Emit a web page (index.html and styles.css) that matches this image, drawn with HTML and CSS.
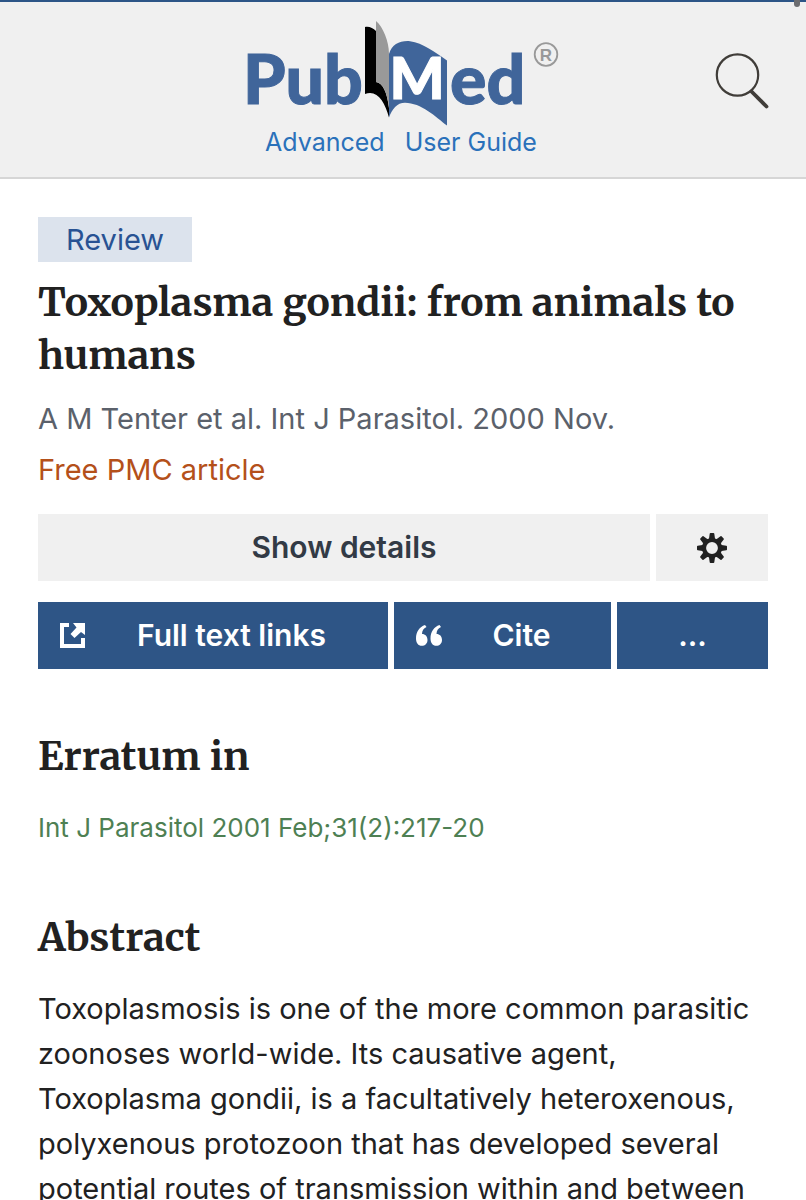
FILE: index.html
```html
<!DOCTYPE html>
<html lang="en">
<head>
<meta charset="utf-8">
<meta name="viewport" content="width=device-width, initial-scale=1">
<title>Toxoplasma gondii: from animals to humans - PubMed</title>
<link rel="stylesheet" href="styles.css">
</head>
<body>
<header class="header">
  <span class="scroll-mark" aria-hidden="true"></span>
  <div class="brand">
    <a class="logo" href="#" aria-label="PubMed">
      <svg width="320" height="110" viewBox="0 0 320 110" aria-hidden="true">
        <path fill="#000" d="M122 9C126 8 130 10 133 13V64C140 65 144 74 146 90V99.500C142 84 134 71 122 76Z"/>
        <path fill="#999" d="M133 3C140 9 146 23 146 36V90C144 74 140 65 133 64Z"/>
        <path fill="#40659a" d="M146 36C149 26 157 22.500 167 23.200C180 25 192 34 204 42.500V107.500C193 99 178 84.700 162 84.700C154 84.700 149 91 146 99.500Z"/>
        <text class="logo-word" x="0" y="86">Pub</text>
        <text class="logo-word" x="207" y="86">ed</text>
        <text class="logo-m" x="174" y="81" text-anchor="middle">M</text>
        <circle cx="303" cy="36.500" r="11.300" fill="none" stroke="#999" stroke-width="1.800"/>
        <text class="logo-mark" x="303" y="42.500" text-anchor="middle">R</text>
      </svg>
    </a>
    <nav class="links">
      <a href="#">Advanced</a>
      <a href="#">User Guide</a>
    </nav>
  </div>
  <button class="search" type="button" aria-label="Search">
    <svg width="56" height="58" viewBox="0 0 56 58" fill="none" stroke="#403d39" stroke-linecap="round" aria-hidden="true">
      <circle cx="24.500" cy="23" r="20.700" stroke-width="2.200"/>
      <path d="M38.500 39.500L53.500 54.500" stroke-width="3.800"/>
    </svg>
  </button>
</header>
<main class="article">
  <span class="tag">Review</span>
  <h1 class="title">Toxoplasma gondii: from animals to humans</h1>
  <p class="citation">A M Tenter et al. Int J Parasitol. 2000 Nov.</p>
  <p class="free">Free PMC article</p>
  <div class="row row-details">
    <button class="btn" type="button">Show details</button>
    <button class="btn" type="button" aria-label="Settings">
      <svg width="30" height="30" viewBox="-15 -15 30 30" aria-hidden="true">
        <g fill="#212121">
          <path id="tooth" d="M-3.200-8L-2.300-14.300Q-2.200-15-1.500-15H1.500Q2.200-15 2.300-14.300L3.200-8Z"/>
          <use href="#tooth" transform="rotate(45)"/>
          <use href="#tooth" transform="rotate(90)"/>
          <use href="#tooth" transform="rotate(135)"/>
          <use href="#tooth" transform="rotate(180)"/>
          <use href="#tooth" transform="rotate(225)"/>
          <use href="#tooth" transform="rotate(270)"/>
          <use href="#tooth" transform="rotate(315)"/>
        </g>
        <circle r="8" fill="none" stroke="#212121" stroke-width="4.200"/>
      </svg>
    </button>
  </div>
  <div class="row row-actions">
    <button class="btn primary with-icon" type="button">
      <svg width="25" height="25" viewBox="0 0 25 25" fill="#fff" aria-hidden="true">
        <path d="M0 0H9V4H4V21H21V15H25V25H0Z"/>
        <path d="M13 0H25V12L21 9L14.500 15L10.500 11L16.500 4.500Z"/>
      </svg>
      <span>Full text links</span>
    </button>
    <button class="btn primary with-icon" type="button">
      <svg width="26" height="25" viewBox="0 0 26 25" fill="#fff" aria-hidden="true">
        <path id="quote" d="M10.500 4C7.500 5.500 6 7.500 6 11C9.200 11 11.500 13.300 11.500 17C11.500 20.500 9 22.800 5.800 22.800C2.200 22.800 0 20 0 15.500C0 8.500 3.500 4 9 2Z"/>
        <use href="#quote" x="14.500"/>
      </svg>
      <span>Cite</span>
    </button>
    <button class="btn primary" type="button" aria-label="More actions">...</button>
  </div>
  <section class="section">
    <h2 class="heading">Erratum in</h2>
    <p class="erratum"><a href="#">Int J Parasitol 2001 Feb;31(2):217-20</a></p>
  </section>
  <section class="section">
    <h2 class="heading">Abstract</h2>
    <p class="abstract">Toxoplasmosis is one of the more common parasitic zoonoses world-wide. Its causative agent, Toxoplasma gondii, is a facultatively heteroxenous, polyxenous protozoon that has developed several potential routes of transmission within and between</p>
  </section>
</main>
</body>
</html>
```
FILE: styles.css
```css
* {
  box-sizing: border-box;
}

body {
  margin: 0;
  background: #fff;
  color: #212121;
  font-family: Inter, "Liberation Sans", sans-serif;
  font-size: 29px;
  line-height: 45px;
}

a {
  color: inherit;
  text-decoration: none;
}

h1,
h2,
p {
  margin: 0;
}

button {
  border: 0;
  padding: 0;
  background: none;
  color: inherit;
  font: inherit;
  cursor: pointer;
}

svg {
  display: block;
}

.header {
  position: relative;
  display: grid;
  grid-template-columns: 1fr auto 1fr;
  align-items: start;
  padding: 16px 37px 21px;
  border-top: 2px solid #2c5587;
  border-bottom: 2px solid #d6d6d6;
  background: #f0f0f0;
}

.scroll-mark {
  position: absolute;
  top: -2px;
  right: 6px;
  width: 6px;
  height: 7px;
  border-radius: 0 0 3px 3px;
  background: #6c6d70;
}

.brand {
  grid-column: 2;
}

.links {
  display: flex;
  justify-content: center;
  gap: 20px;
  padding-right: 4px;
  color: #2a71ba;
  font-size: 25px;
  line-height: 28px;
}

.logo-word {
  fill: #40659a;
  stroke: #40659a;
  stroke-width: 1px;
  font: 900 68px Lato, sans-serif;
}

.logo-m {
  fill: #fff;
  stroke: #fff;
  stroke-width: 1px;
  font: 900 58px Lato, sans-serif;
}

.logo-mark {
  fill: #999;
  font: 700 17px "Liberation Sans", sans-serif;
}

.search {
  justify-self: end;
  margin-top: 34px;
}

.article {
  padding: 38px 38px 0;
}

.tag {
  display: inline-block;
  padding: 0 28px;
  background: #dce3ed;
  color: #285293;
}

.title,
.heading {
  font-family: Merriweather, "Liberation Serif", serif;
  font-weight: 700;
  font-size: 39px;
  line-height: 53px;
}

.title {
  margin-top: 14px;
}

.citation {
  margin-top: 14px;
  color: #5b616b;
}

.free {
  margin-top: 6px;
  color: #b4501a;
}

.row {
  display: grid;
  gap: 6px;
}

.row-details {
  grid-template-columns: 612fr 112fr;
  margin-top: 22px;
}

.row-actions {
  grid-template-columns: 350fr 217fr 151fr;
  margin-top: 21px;
}

.btn {
  display: flex;
  align-items: center;
  justify-content: center;
  min-height: 67px;
  background: #f0f0f0;
  color: #323a45;
  font-size: 30px;
  font-weight: 600;
}

.primary {
  background: #2e5586;
  color: #fff;
}

.with-icon {
  padding: 0 10px 0 22px;
}

.with-icon span {
  flex: 1;
}

.section {
  margin-top: 61px;
}

.erratum {
  margin-top: 22px;
  color: #4e8053;
  font-size: 26px;
}

.abstract {
  margin-top: 22px;
}
```
